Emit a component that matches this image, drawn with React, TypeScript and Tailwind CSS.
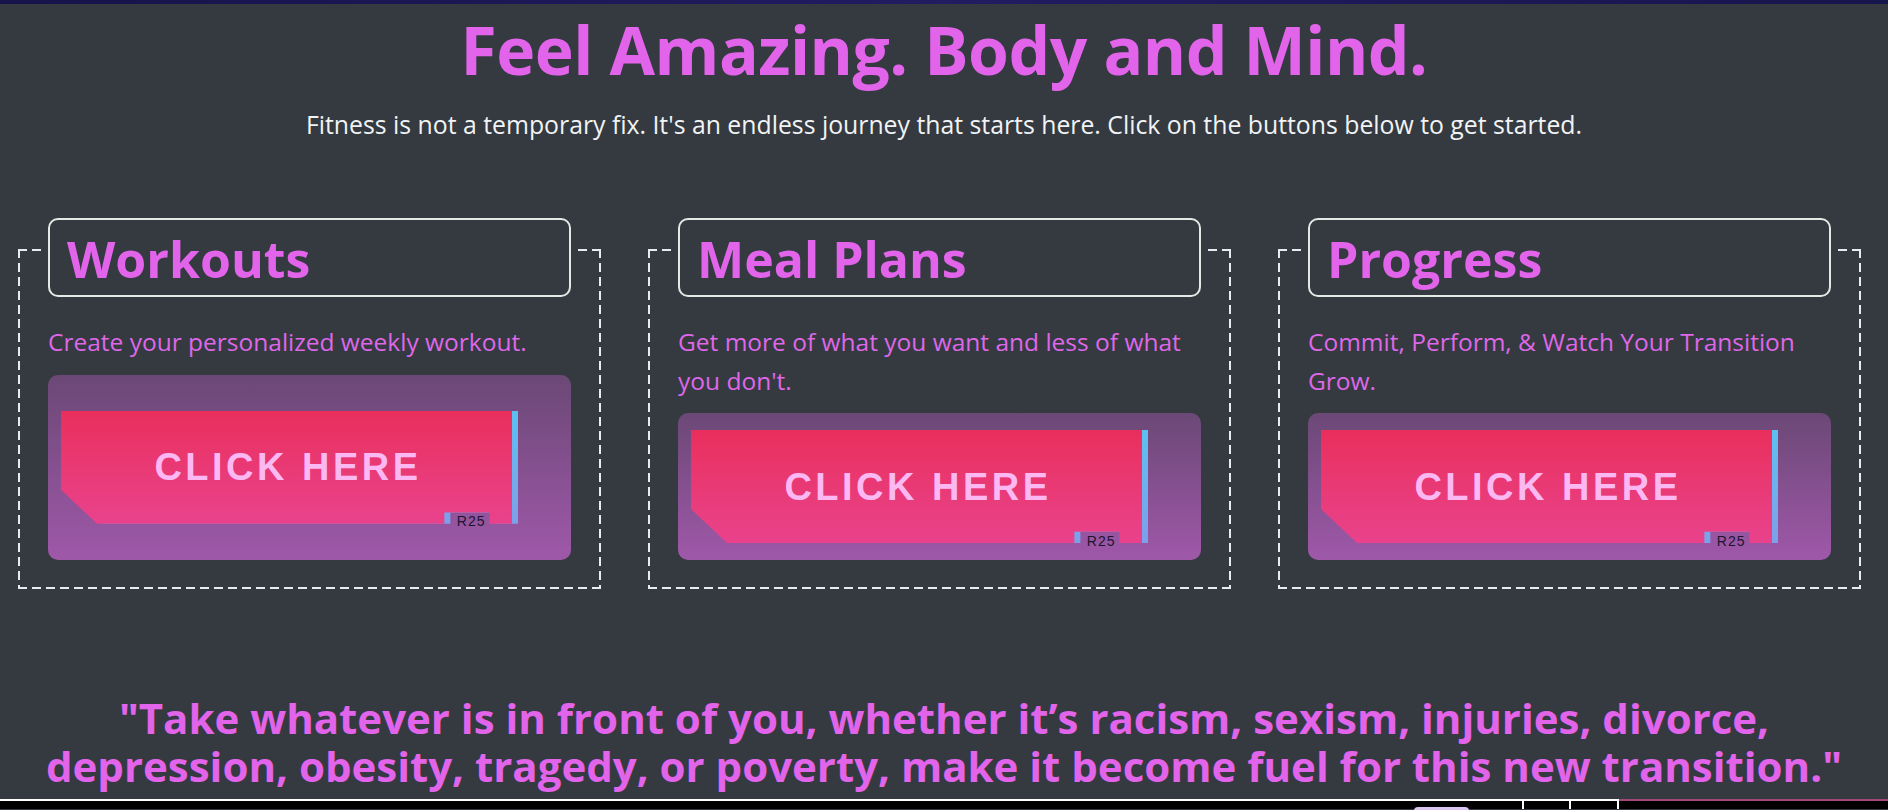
import React from 'react';

const sections = [
  { title: 'Workouts', text: ['Create your personalized weekly workout.'] },
  { title: 'Meal Plans', text: ['Get more of what you want and less of what', "you don't."] },
  { title: 'Progress', text: ['Commit, Perform, & Watch Your Transition', 'Grow.'] },
];

function CyberButton() {
  return (
    <div className="relative w-[451px] h-[113px] flex items-center justify-center">
      {/* blue shadow shape, shifted right */}
      <div className="absolute inset-0 translate-x-[6px] bg-gradient-to-b from-[#5bc0f1] to-[#7ca0ea] [clip-path:polygon(0_0,100%_0,100%_100%,95%_100%,95%_90%,85%_90%,85%_100%,8%_100%,0_70%)]" />
      <div className="absolute inset-0 bg-gradient-to-b from-[#e92e5c] to-[#e9428c] [clip-path:polygon(0_0,100%_0,100%_100%,95%_100%,95%_90%,85%_90%,85%_100%,8%_100%,0_70%)]" />
      <span className="relative pl-[3px] font-['Liberation_Sans',Arial,sans-serif] font-bold text-[38px] leading-none tracking-[3.5px] text-[#fbb8f3]">
        CLICK HERE
      </span>
      <span className="absolute bottom-[-5%] right-[5%] px-[4px] py-[1px] leading-none tracking-[1px] text-[14px] text-[#1d1430] font-['Liberation_Sans',Arial,sans-serif]">
        R25
      </span>
    </div>
  );
}

export default function App() {
  return (
    <div className="min-h-[810px] bg-[#343a40] font-['Open_Sans','Noto_Sans',sans-serif] flex flex-col">
      <div className="h-[4px] bg-gradient-to-r from-[#15134a] via-[#221c60] to-[#17154d]" />

      <header className="text-center">
        <h1 className="text-[66px] leading-[90px] font-bold text-[#e264ea] tracking-[-0.5px]">
          Feel Amazing. Body and Mind.
        </h1>
        <p className="mt-[14px] text-[24.8px] leading-[32px] text-[#f1f3f5]">
          Fitness is not a temporary fix. It's an endless journey that starts here. Click on the buttons below to get started.
        </p>
      </header>

      <section className="mt-[70px] flex gap-[47px] pl-[18px]">
        {sections.map((s) => (
          <fieldset
            key={s.title}
            className="w-[583px] flex flex-col border-2 border-transparent px-[28px] pb-[27px] min-w-0 [background:repeating-linear-gradient(90deg,#e9ecef_0_9px,transparent_9px_14px)_left_top/100%_2px_no-repeat_border-box,repeating-linear-gradient(90deg,#e9ecef_0_9px,transparent_9px_14px)_left_bottom/100%_2px_no-repeat_border-box,repeating-linear-gradient(180deg,#e9ecef_0_9px,transparent_9px_14px)_left_top/2px_100%_no-repeat_border-box,repeating-linear-gradient(180deg,#e9ecef_0_9px,transparent_9px_14px)_right_top/2px_100%_no-repeat_border-box]"
          >
            <legend className="relative top-[8px] w-full bg-[#343a40] shadow-[0_0_0_5px_#343a40] border-2 border-[#e5e9e5] rounded-[10px] px-[17px] pt-[3px] text-[50px] leading-[72px] font-bold text-[#e264ea]">
              {s.title}
            </legend>
            <p className="mt-[34px] mb-[13px] text-[24.5px] leading-[38.5px] text-[#df67e8]">
              {s.text.map((t, i) => (
                <React.Fragment key={i}>
                  {i > 0 && <br />}
                  {t}
                </React.Fragment>
              ))}
            </p>
            <div className="flex-1 flex items-center pl-[13px] py-[17px] rounded-[10px] bg-gradient-to-b from-[#6b4876] to-[#9f58a9]">
              <CyberButton />
            </div>
          </fieldset>
        ))}
      </section>

      <blockquote className="mt-[105px] text-center text-[42px] leading-[48px] font-bold text-[#e264ea]">
        "Take whatever is in front of you, whether it’s racism, sexism, injuries, divorce,
        <br />
        depression, obesity, tragedy, or poverty, make it become fuel for this new transition."
      </blockquote>

      <footer className="mt-[9px] h-[10px] flex bg-black border-t-2 border-white">
        <div className="w-[1414px]" />
        <div className="mt-[6px] w-[55px] h-[4px] rounded-t-full bg-[#d9c4f2]" />
        <div className="w-[55px] border-r-2 border-white" />
        <div className="w-[47px] border-r-2 border-white" />
        <div className="w-[48px] border-r-2 border-white" />
        <div className="flex-1 -mt-[2px] border-t-2 border-[#a3487a]" />
      </footer>
    </div>
  );
}
